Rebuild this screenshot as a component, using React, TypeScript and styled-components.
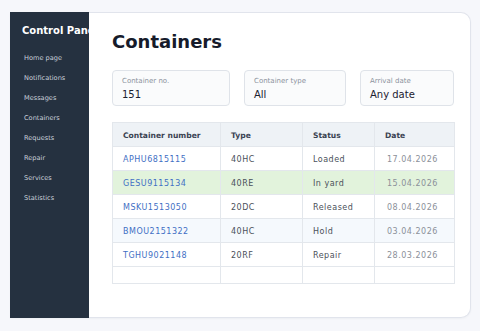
import { createGlobalStyle, styled } from "styled-components";

const GlobalStyle = createGlobalStyle`
  html, body {
    margin: 0;
    padding: 0;
    background: #f6f7fb;
    font-family: "DejaVu Sans", Verdana, sans-serif;
  }
`;

type Row = {
  number: string;
  type: string;
  status: string;
  date: string;
  tone?: "green" | "blue";
};

const menuItems = [
  "Home page",
  "Notifications",
  "Messages",
  "Containers",
  "Requests",
  "Repair",
  "Services",
  "Statistics",
];

const rows: Row[] = [
  { number: "APHU6815115", type: "40HC", status: "Loaded", date: "17.04.2026" },
  { number: "GESU9115134", type: "40RE", status: "In yard", date: "15.04.2026", tone: "green" },
  { number: "MSKU1513050", type: "20DC", status: "Released", date: "08.04.2026" },
  { number: "BMOU2151322", type: "40HC", status: "Hold", date: "03.04.2026", tone: "blue" },
  { number: "TGHU9021148", type: "20RF", status: "Repair", date: "28.03.2026" },
];

const filters = [
  { label: "Container no.", value: "151", width: 118 },
  { label: "Container type", value: "All", width: 102 },
  { label: "Arrival date", value: "Any date", width: 94 },
];

const App = () => {
  return (
    <Page>
      <GlobalStyle />
      <Card>
        <Sidebar>
          <Brand>Control Panel</Brand>
          <Menu>
            {menuItems.map((item) => (
              <MenuItem key={item}>{item}</MenuItem>
            ))}
          </Menu>
        </Sidebar>
        <Main>
          <Title>Containers</Title>
          <Filters>
            {filters.map((f) => (
              <Field key={f.label} $width={f.width}>
                <FieldLabel>{f.label}</FieldLabel>
                <FieldValue>{f.value}</FieldValue>
              </Field>
            ))}
          </Filters>
          <Table>
            <colgroup>
              <col style={{ width: 108 }} />
              <col style={{ width: 82 }} />
              <col style={{ width: 72 }} />
              <col style={{ width: 80 }} />
            </colgroup>
            <thead>
              <tr>
                <Th>Container number</Th>
                <Th>Type</Th>
                <Th>Status</Th>
                <Th>Date</Th>
              </tr>
            </thead>
            <tbody>
              {rows.map((r) => (
                <Tr key={r.number} $tone={r.tone}>
                  <NumberCell>{r.number}</NumberCell>
                  <Td>{r.type}</Td>
                  <Td>{r.status}</Td>
                  <DateCell>{r.date}</DateCell>
                </Tr>
              ))}
              <tr>
                <EmptyCell />
                <EmptyCell />
                <EmptyCell />
                <EmptyCell />
              </tr>
            </tbody>
          </Table>
        </Main>
      </Card>
    </Page>
  );
};

export default App;

const Page = styled.div`
  padding: 12px 10px 13px 10px;
  height: 331px;
  box-sizing: border-box;
  display: flex;
`;

const Card = styled.div`
  flex: 1;
  display: flex;
  background: #ffffff;
  border: 1px solid #e1e4ec;
  border-left: none;
  border-radius: 0 10px 10px 0;
  box-shadow: 0 1px 2px rgba(30, 40, 60, 0.04);
`;

const Sidebar = styled.aside`
  width: 79px;
  flex-shrink: 0;
  background: #253140;
  margin: -1px 0 -1px 0;
  padding: 13px 0 0 12px;
  box-sizing: border-box;
  overflow: hidden;
`;

const Brand = styled.div`
  color: #ffffff;
  font-weight: bold;
  font-size: 10px;
  line-height: 12px;
  white-space: nowrap;
`;

const Menu = styled.nav`
  display: flex;
  flex-direction: column;
  gap: 11px;
  margin-top: 17px;
  padding-left: 2px;
`;

const MenuItem = styled.div`
  color: #c9d0da;
  font-size: 6.6px;
  line-height: 9px;
  white-space: nowrap;
`;

const Main = styled.main`
  flex: 1;
  padding: 18px 15px 0 23px;
  min-width: 0;
`;

const Title = styled.h1`
  margin: 0;
  font-size: 18px;
  line-height: 22px;
  font-weight: bold;
  color: #161b2b;
`;

const Filters = styled.div`
  display: flex;
  gap: 14px;
  margin-top: 17px;
`;

const Field = styled.div<{ $width: number }>`
  width: ${(p) => p.$width}px;
  height: 36px;
  box-sizing: border-box;
  border: 1px solid #dfe3e9;
  border-radius: 4px;
  background: #fafbfc;
  padding: 5px 9px 0 9px;
  display: flex;
  flex-direction: column;
  gap: 3px;
`;

const FieldLabel = styled.span`
  font-size: 7px;
  line-height: 10px;
  color: #8b929c;
`;

const FieldValue = styled.span`
  font-size: 10px;
  line-height: 12px;
  color: #1c2230;
`;

const Table = styled.table`
  margin-top: 16px;
  width: 342px;
  border-collapse: collapse;
  table-layout: fixed;
`;

const Th = styled.th`
  height: 22px;
  padding: 1px 0 0 10px;
  background: #eef2f6;
  border: 1px solid #e3e7ec;
  text-align: left;
  font-size: 7.6px;
  font-weight: bold;
  color: #3b4352;
`;

const Tr = styled.tr<{ $tone?: "green" | "blue" }>`
  background: ${(p) =>
    p.$tone === "green" ? "#e2f3dc" : p.$tone === "blue" ? "#f5f9fd" : "#ffffff"};
`;

const Td = styled.td`
  height: 21px;
  padding: 2px 0 0 10px;
  border: 1px solid #e3e7ec;
  font-size: 8px;
  letter-spacing: 0.5px;
  color: #4a505a;
  white-space: nowrap;
`;

const EmptyCell = styled(Td)`
  height: 14px;
`;

const NumberCell = styled(Td)`
  color: #3f6fc4;
`;

const DateCell = styled(Td)`
  padding-left: 12px;
  color: #8b9099;
`;
